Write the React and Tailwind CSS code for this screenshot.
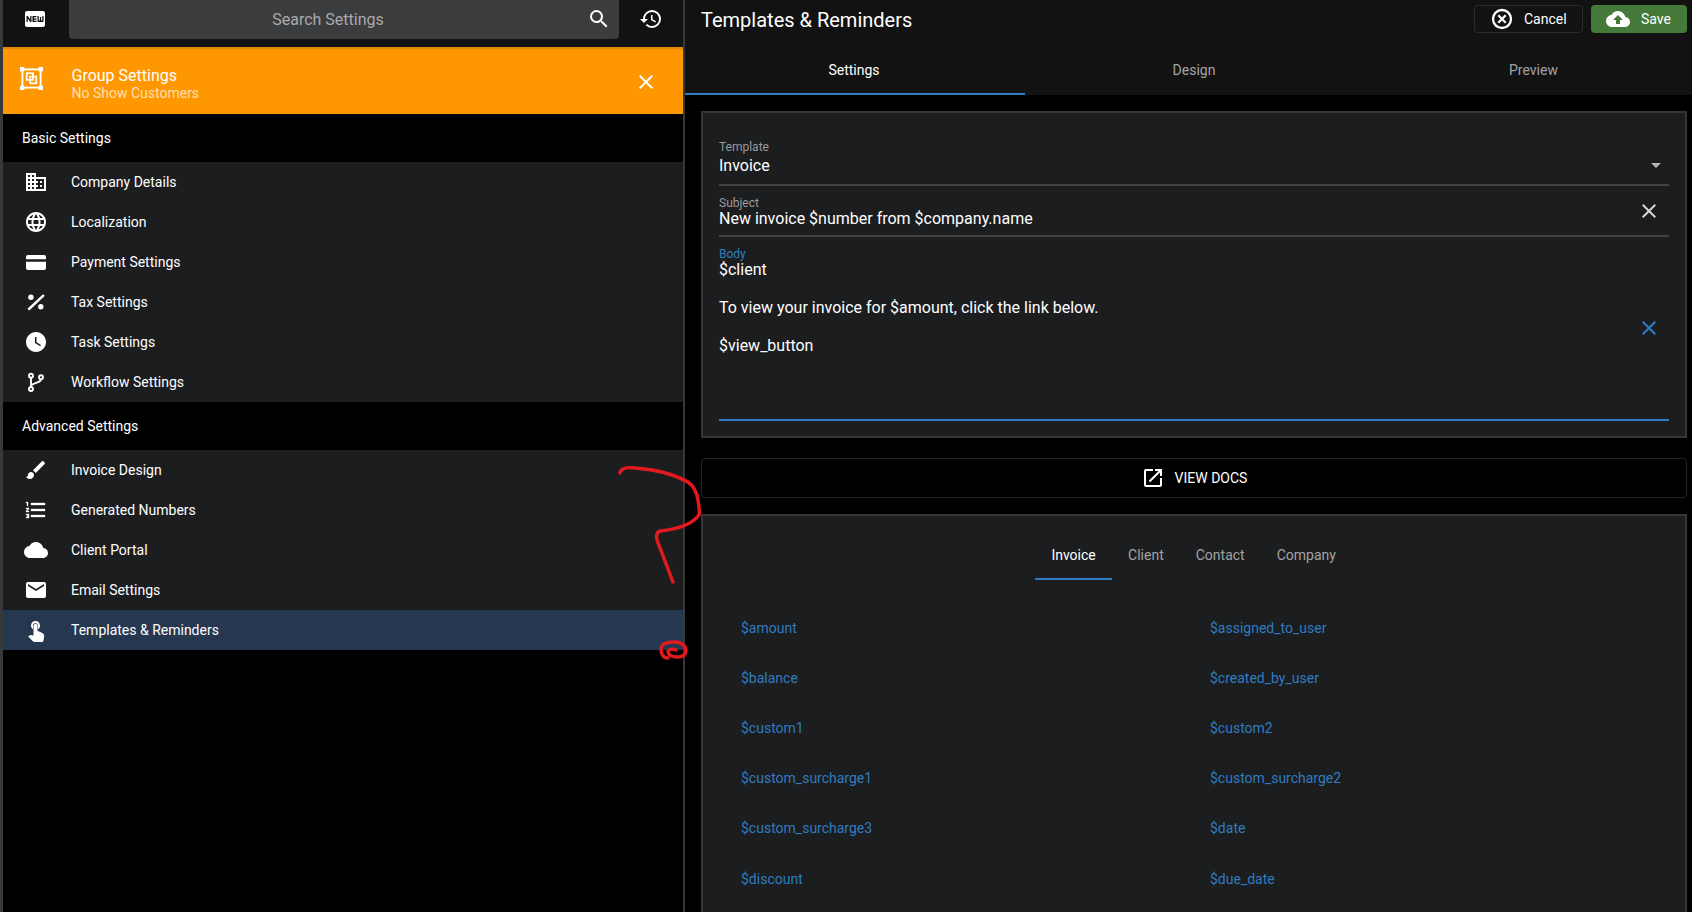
import {
  MdBusiness, MdLanguage, MdWatchLater, MdBrush, MdCloud, MdEmail,
  MdSearch, MdHistory, MdClose, MdFiberNew, MdCloudUpload, MdOpenInNew, MdArrowDropDown,
} from 'react-icons/md';

function PaymentIcon({ className }) {
  return (
    <svg className={className} viewBox="0 0 24 24" fill="currentColor">
      <path d="M4 5h16a2 2 0 0 1 2 2v2.3H2V7a2 2 0 0 1 2-2z" />
      <path d="M2 11.7h20V18a2 2 0 0 1-2 2H4a2 2 0 0 1-2-2z" />
    </svg>
  );
}

function PercentIcon({ className }) {
  return (
    <svg className={className} viewBox="0 0 24 24" fill="currentColor">
      <circle cx="6.9" cy="7.2" r="2.7" />
      <circle cx="16.8" cy="16.8" r="2.7" />
      <path d="M5 19L19.3 5.7" stroke="currentColor" strokeWidth="2.4" strokeLinecap="round" />
    </svg>
  );
}

function BranchIcon({ className }) {
  return (
    <svg className={className} viewBox="0 0 24 24" fill="none" stroke="currentColor" strokeWidth="1.9">
      <circle cx="7" cy="5.7" r="2" />
      <circle cx="7" cy="19" r="2" />
      <circle cx="17" cy="7.3" r="2" />
      <path d="M7 7.7V17M17 9.3C17 13 11 12 7 15.5" />
    </svg>
  );
}

function ListIcon({ className }) {
  return (
    <svg className={className} viewBox="0 0 24 24" fill="currentColor" stroke="currentColor" strokeWidth="0.35">
      <path d="M2 17h2v.5H3v1h1v.5H2v1h3v-4H2v1zm1-9h1V4H2v1h1v3zm-1 3h1.8L2 13.1v.9h3v-1H3.2L5 10.9V10H2v1zm5-6v2h14V5H7zm0 14h14v-2H7v2zm0-6h14v-2H7v2z" />
    </svg>
  );
}

function TouchIcon({ className }) {
  return (
    <svg className={className} viewBox="0 0 24 24" fill="currentColor">
      <path d="M9 11.24V7.5a2.5 2.5 0 0 1 5 0v3.74c1.21-.81 2-2.18 2-3.74C16 5.01 13.99 3 11.5 3S7 5.01 7 7.5c0 1.56.79 2.93 2 3.74z" />
      <path stroke="currentColor" strokeWidth="1" d="M18.84 15.87l-4.54-2.26c-.17-.07-.35-.11-.54-.11H13v-6c0-.83-.67-1.5-1.5-1.5S10 6.67 10 7.5v10.74l-3.43-.72c-.08-.01-.15-.03-.24-.03-.31 0-.59.13-.79.33l-.79.8 4.94 4.94c.27.27.65.44 1.06.44h6.79c.75 0 1.33-.55 1.44-1.28l.75-5.27c.01-.07.02-.14.02-.2 0-.62-.38-1.16-.91-1.38z" />
    </svg>
  );
}

function CancelIcon({ className }) {
  return (
    <svg className={className} viewBox="0 0 24 24" fill="none" stroke="currentColor" strokeWidth="2.3">
      <circle cx="12" cy="12" r="9" />
      <path d="M8.3 8.3l7.4 7.4M15.7 8.3l-7.4 7.4" />
    </svg>
  );
}

function GroupIcon({ className }) {
  return (
    <svg className={className} viewBox="0 0 24 24" fill="none" stroke="currentColor" strokeWidth="2">
      <rect x="2.5" y="2.5" width="19" height="19" />
      <rect x="0" y="0" width="4.5" height="4.5" fill="currentColor" stroke="none" />
      <rect x="19.5" y="0" width="4.5" height="4.5" fill="currentColor" stroke="none" />
      <rect x="0" y="19.5" width="4.5" height="4.5" fill="currentColor" stroke="none" />
      <rect x="19.5" y="19.5" width="4.5" height="4.5" fill="currentColor" stroke="none" />
      <rect x="7" y="6.5" width="6.5" height="7" strokeWidth="1.8" />
      <rect x="10.5" y="10" width="6.5" height="7" strokeWidth="1.8" />
    </svg>
  );
}

const basicItems = [
  { label: 'Company Details', icon: <MdBusiness className="h-6 w-6" /> },
  { label: 'Localization', icon: <MdLanguage className="h-6 w-6" /> },
  { label: 'Payment Settings', icon: <PaymentIcon className="h-6 w-6" /> },
  { label: 'Tax Settings', icon: <PercentIcon className="h-6 w-6" /> },
  { label: 'Task Settings', icon: <MdWatchLater className="h-6 w-6" /> },
  { label: 'Workflow Settings', icon: <BranchIcon className="h-6 w-6" /> },
];

const advancedItems = [
  { label: 'Invoice Design', icon: <MdBrush className="h-6 w-6" /> },
  { label: 'Generated Numbers', icon: <ListIcon className="h-6 w-6" /> },
  { label: 'Client Portal', icon: <MdCloud className="h-6 w-6" /> },
  { label: 'Email Settings', icon: <MdEmail className="h-6 w-6" /> },
  { label: 'Templates & Reminders', icon: <TouchIcon className="h-6 w-6" />, active: true },
];

const variables = [
  ['$amount', '$assigned_to_user'],
  ['$balance', '$created_by_user'],
  ['$custom1', '$custom2'],
  ['$custom_surcharge1', '$custom_surcharge2'],
  ['$custom_surcharge3', '$date'],
  ['$discount', '$due_date'],
];

function SideRow({ item }) {
  return (
    <div className={`flex h-10 items-center text-sm text-white ${item.active ? 'bg-[#263750]' : 'bg-[#1c1d1f]'}`}>
      <div className="flex w-[68px] shrink-0 justify-center pr-[2px]">{item.icon}</div>
      <span>{item.label}</span>
    </div>
  );
}

function SectionHeader({ children }) {
  return <div className="flex h-12 items-center bg-black pl-[19px] text-sm text-white">{children}</div>;
}

function App() {
  return (
    <div className="relative flex h-screen w-full overflow-hidden bg-black font-['Roboto',sans-serif]">
      {/* settings sidebar */}
      <div className="flex h-full w-[685px] shrink-0 flex-col border-r-2 border-l-[3px] border-[#37383a]">
        <div className="flex h-[47px] shrink-0 bg-[#121212] text-white">
          <div className="flex w-[66px] justify-center pt-[7px] pr-[2px]">
            <MdFiberNew className="h-6 w-6" />
          </div>
          <div className="relative flex h-[39px] w-[550px] items-center justify-center rounded-b-sm bg-[#3b3c3e] pr-[32px] text-base text-[#a9a9aa]">
            Search Settings
            <MdSearch className="absolute top-[7px] right-[8px] h-6 w-6 text-white" />
          </div>
          <div className="flex flex-1 justify-center pt-[7px]">
            <MdHistory className="h-6 w-6" />
          </div>
        </div>

        <div className="flex h-[67px] shrink-0 items-start border-t-2 border-[#e08a0a] bg-[#ff9800] text-white">
          <GroupIcon className="mt-[18px] ml-[17px] h-[23px] w-[23px]" />
          <div className="ml-[28.5px] flex flex-col pt-[17px]">
            <span className="text-base leading-[19px]">Group Settings</span>
            <span className="text-sm leading-[17px] text-white/70">No Show Customers</span>
          </div>
          <MdClose className="mt-[21px] mr-[25px] ml-auto h-[24px] w-[24px]" />
        </div>

        <SectionHeader>Basic Settings</SectionHeader>
        {basicItems.map((item) => <SideRow key={item.label} item={item} />)}
        <SectionHeader>Advanced Settings</SectionHeader>
        {advancedItems.map((item) => <SideRow key={item.label} item={item} />)}
      </div>

      {/* template editor */}
      <div className="flex h-full min-w-0 flex-1 flex-col overflow-hidden">
        <div className="flex h-[47px] shrink-0 bg-[#121212] pt-[5px] pr-[5px] pl-4 text-white">
          <span className="text-xl leading-[30px]">Templates &amp; Reminders</span>
          <button className="ml-auto flex h-7 w-[109px] items-center rounded border border-[#2b2b2c] pl-[15px] text-sm">
            <CancelIcon className="h-6 w-6" />
            <span className="ml-[10px]">Cancel</span>
          </button>
          <button className="ml-2 flex h-7 w-[96px] items-center rounded bg-[#44793a] pl-[15px] text-sm">
            <MdCloudUpload className="h-6 w-6" />
            <span className="ml-[11px]">Save</span>
          </button>
        </div>

        <div className="flex h-[48px] shrink-0 bg-[#121212] text-sm">
          <div className="flex w-[340px] shrink-0 items-center justify-center border-b-2 border-[#2f7cc0] pr-[2px] text-white">Settings</div>
          <div className="flex w-[340px] shrink-0 items-center justify-center pr-[2px] pb-[2px] text-[#a3a3a3]">Design</div>
          <div className="flex w-[340px] shrink-0 items-center justify-center pr-[3px] pb-[2px] text-[#a3a3a3]">Preview</div>
        </div>

        <div className="flex min-h-0 flex-1 flex-col pt-4 pr-[5px] pl-4">
          <div className="relative h-[327px] shrink-0 border-2 border-[#343537] bg-[#1c1d1f] px-4 pt-[27px]">
            <div className="h-[46px] border-b-2 border-[#414244]">
              <div className="text-xs leading-[14px] text-[#9a9a9b]">Template</div>
              <div className="-mt-[1px] flex items-center justify-between text-base leading-[19px] text-white">
                Invoice
                <MdArrowDropDown className="mr-[1px] h-6 w-6 text-[#b5b5b5]" />
              </div>
            </div>
            <div className="relative h-[51px] border-b-2 border-[#414244] pt-[11px]">
              <div className="text-xs leading-[12px] text-[#9a9a9b]">Subject</div>
              <div className="text-base leading-[20px] text-white">New invoice $number from $company.name</div>
              <MdClose className="absolute top-[13px] right-[8px] h-6 w-6 text-[#d5d5d5]" />
            </div>
            <div className="relative h-[184px] border-b-2 border-[#2f7cc0] pt-[11px]">
              <div className="text-xs leading-[12px] text-[#2f7cc0]">Body</div>
              <div className="text-base leading-[19px] whitespace-pre-line text-white">
                {'$client\n\nTo view your invoice for $amount, click the link below.\n\n$view_button'}
              </div>
              <MdClose className="absolute top-[79px] right-[8px] h-6 w-6 text-[#2f7cc0]" />
            </div>
          </div>

          <button className="mt-[20px] flex h-[40px] shrink-0 items-center justify-center rounded border border-[#242526] bg-black text-sm text-white">
            <MdOpenInNew className="h-6 w-6" />
            <span className="ml-[10px]">VIEW DOCS</span>
          </button>

          <div className="mt-[16px] min-h-0 flex-1 overflow-hidden border-2 border-b-0 border-[#343537] bg-[#1c1d1f]">
            <div className="flex h-[64px] justify-center pr-[1px] text-sm text-[#a3a3a3]">
              <div className="mt-[14px] flex h-[50px] w-[77px] items-center justify-center border-b-2 border-[#2f7cc0] pt-[2px] text-white">Invoice</div>
              <div className="mt-[14px] flex h-[50px] items-center px-4">Client</div>
              <div className="mt-[14px] flex h-[50px] items-center px-4">Contact</div>
              <div className="mt-[14px] flex h-[50px] items-center px-4">Company</div>
            </div>
            <div className="grid grid-cols-[469px_1fr] pt-[22.5px] pl-[38px] text-sm text-[#2f7cc0]">
              {variables.flat().map((name) => (
                <div key={name} className="flex h-[50.2px] items-center">{name}</div>
              ))}
            </div>
          </div>
        </div>
      </div>

      {/* hand-drawn red marks over the screenshot */}
      <svg className="pointer-events-none absolute inset-0 h-full w-full" fill="none" stroke="#e2191f" strokeWidth="3.5" strokeLinecap="round" strokeLinejoin="round">
        <path d="M620 473C621 468 628 467 635 468C650 469 672 473 688 482C695 487 697 493 698 500C699 506 700 512 699 515C693 523 680 529 660 531C657 532 656 535 657 540L673 582" />
        <path d="M668 658C662 658 661 652 661 648C662 643 668 642 674 642C681 642 685 645 686 650C686 655 682 657 677 657C672 657 668 655 668 651C669 649 673 649 676 650" />
      </svg>
    </div>
  );
}

export default App;
